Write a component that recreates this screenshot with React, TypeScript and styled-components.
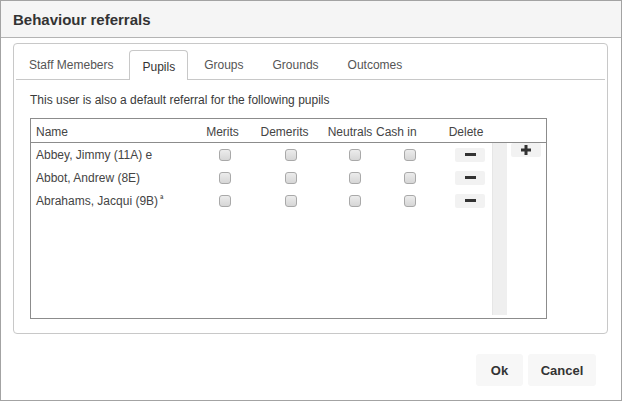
import { createGlobalStyle } from "styled-components";
import styled from "styled-components";

interface Pupil {
    name: string,
    mark?: string,
    superMark?: boolean
}

const pupils: Pupil[] = [
    { name: "Abbey, Jimmy (11A)", mark: "e" },
    { name: "Abbot, Andrew (8E)" },
    { name: "Abrahams, Jacqui (9B)", mark: "ª", superMark: true },
]

const tabs = ["Staff Memebers", "Pupils", "Groups", "Grounds", "Outcomes"]

const MinusIcon = () => (
    <svg width="11" height="3" viewBox="0 0 11 3">
        <rect x="0" y="0" width="11" height="3" fill="#333" />
    </svg>
)

const PlusIcon = () => (
    <svg width="10" height="10" viewBox="0 0 10 10">
        <rect x="0" y="3.5" width="10" height="3" fill="#333" />
        <rect x="3.5" y="0" width="3" height="10" fill="#333" />
    </svg>
)

const App = () => {
    return (
        <>
            <GlobalStyle />
            <Dialog>
                <Header>
                    <Title>Behaviour referrals</Title>
                </Header>
                <Body>
                    <Panel>
                        <TabStrip>
                            {tabs.map((tab) => (
                                <Tab key={tab} $active={tab == "Pupils"}>{tab}</Tab>
                            ))}
                        </TabStrip>
                        <Content>
                            <Intro>This user is also a default referral for the following pupils</Intro>
                            <Grid>
                                <HeadRow>
                                    <NameHead>Name</NameHead>
                                    <ColHead>Merits</ColHead>
                                    <ColHead>Demerits</ColHead>
                                    <ColHead>Neutrals</ColHead>
                                    <ColHead>Cash in</ColHead>
                                    <ColHead>Delete</ColHead>
                                </HeadRow>
                                <GridBody>
                                    <List>
                                        {pupils.map((pupil) => (
                                            <Row key={pupil.name}>
                                                <NameCell>
                                                    {pupil.name}
                                                    {pupil.mark && (pupil.superMark
                                                        ? <SupMark>{pupil.mark}</SupMark>
                                                        : <> {pupil.mark}</>)}
                                                </NameCell>
                                                <Cell><Check /></Cell>
                                                <Cell><Check /></Cell>
                                                <Cell><Check /></Cell>
                                                <Cell><Check /></Cell>
                                                <DeleteCell>
                                                    <SmallButton><MinusIcon /></SmallButton>
                                                </DeleteCell>
                                            </Row>
                                        ))}
                                    </List>
                                    <ScrollTrack />
                                    <Side>
                                        <SmallButton><PlusIcon /></SmallButton>
                                    </Side>
                                </GridBody>
                            </Grid>
                        </Content>
                    </Panel>
                </Body>
                <Footer>
                    <FooterButton $width={47}>Ok</FooterButton>
                    <FooterButton $width={68}>Cancel</FooterButton>
                </Footer>
            </Dialog>
        </>
    )
}

export default App


const GlobalStyle = createGlobalStyle`
    body {
        margin: 0;
        background: #fff;
        font-family: "Liberation Sans", Arial, sans-serif;
        color: #333;
    }
    * {
        box-sizing: border-box;
    }
`

const Dialog = styled.div`
    width: 622px;
    height: 401px;
    border: 1px solid #a3a3a3;
    display: flex;
    flex-direction: column;
    background: #fff;
`

const Header = styled.div`
    height: 37px;
    flex-shrink: 0;
    background: #f5f5f5;
    border-bottom: 1px solid #b4b4b4;
    display: flex;
    align-items: center;
    padding-left: 12px;
`

const Title = styled.h1`
    margin: 0;
    font-size: 15px;
    font-weight: bold;
    color: #333;
    padding-top: 1px;
`

const Body = styled.div`
    padding: 5px 0 0 12px;
`

const Panel = styled.div`
    width: 595px;
    height: 291px;
    border: 1px solid #c8c8c8;
    border-radius: 4px;
    padding-top: 6px;
    display: flex;
    flex-direction: column;
`

const TabStrip = styled.div`
    display: flex;
    gap: 3px;
    height: 30px;
    margin: 0 2px 0 2px;
    border-bottom: 1px solid #c8c8c8;
`

const Tab = styled.div<{ $active?: boolean }>`
    padding: 0 12px;
    font-size: 12px;
    line-height: 14px;
    display: flex;
    align-items: center;
    color: ${(p) => (p.$active ? "#333" : "#555")};
    padding-top: ${(p) => (p.$active ? "2px" : "0")};
    background: #fff;
    border: 1px solid ${(p) => (p.$active ? "#c8c8c8" : "transparent")};
    border-bottom: none;
    border-radius: 4px 4px 0 0;
    height: ${(p) => (p.$active ? "30px" : "29px")};
    white-space: nowrap;
`

const Content = styled.div`
    padding: 0 16px;
`

const Intro = styled.p`
    margin: 13px 0 11px;
    font-size: 12px;
    line-height: 14px;
    color: #3a3a3a;
`

const Grid = styled.div`
    width: 517px;
    height: 201px;
    border: 1px solid #8c8c8c;
    display: flex;
    flex-direction: column;
`

const HeadRow = styled.div`
    display: grid;
    grid-template-columns: 169px 45px 79px 52px 40px 100px;
    height: 24px;
    padding-top: 3px;
    border-bottom: 1px solid #8c8c8c;
    align-items: center;
    font-size: 12px;
    color: #444;
    flex-shrink: 0;
`

const NameHead = styled.div`
    padding-left: 5px;
`

const ColHead = styled.div`
    text-align: center;
    white-space: nowrap;
`

const GridBody = styled.div`
    flex: 1;
    display: flex;
`

const List = styled.div`
    width: 461px;
    display: flex;
    flex-direction: column;
`

const Row = styled.div`
    display: grid;
    grid-template-columns: 169px 50px 82px 46px 64px 50px;
    height: 23px;
    align-items: center;
    font-size: 12px;
    color: #444;
`

const NameCell = styled.div`
    padding-left: 5px;
    white-space: nowrap;
`

const SupMark = styled.span`
    font-size: 9px;
    vertical-align: 3px;
    margin-left: 2px;
    font-weight: bold;
`

const Cell = styled.div`
    display: flex;
    justify-content: center;
`

const DeleteCell = styled.div`
    display: flex;
    justify-content: flex-end;
    padding-right: 7px;
`

const Check = styled.span`
    display: block;
    width: 12px;
    height: 12px;
    border: 1px solid #a9a9a9;
    border-radius: 3px;
    background: linear-gradient(#ececec, #d6d6d6);
`

const SmallButton = styled.span`
    width: 30px;
    height: 14px;
    border-radius: 2px;
    background: #f2f2f2;
    display: flex;
    align-items: center;
    justify-content: center;
`

const ScrollTrack = styled.div`
    width: 15px;
    margin-bottom: 3px;
    background: #efefef;
    border-left: 1px solid #e6e6e6;
`

const Side = styled.div`
    flex: 1;
    padding-left: 4px;
`

const Footer = styled.div`
    flex: 1;
    display: flex;
    justify-content: flex-end;
    align-items: flex-start;
    gap: 5px;
    padding: 20px 25px 0 0;
`

const FooterButton = styled.button<{ $width: number }>`
    width: ${(p) => p.$width}px;
    height: 32px;
    border: none;
    border-radius: 3px;
    background: #f7f7f7;
    font-family: "Liberation Sans", Arial, sans-serif;
    font-size: 13px;
    font-weight: bold;
    color: #333;
    padding: 0;
`
